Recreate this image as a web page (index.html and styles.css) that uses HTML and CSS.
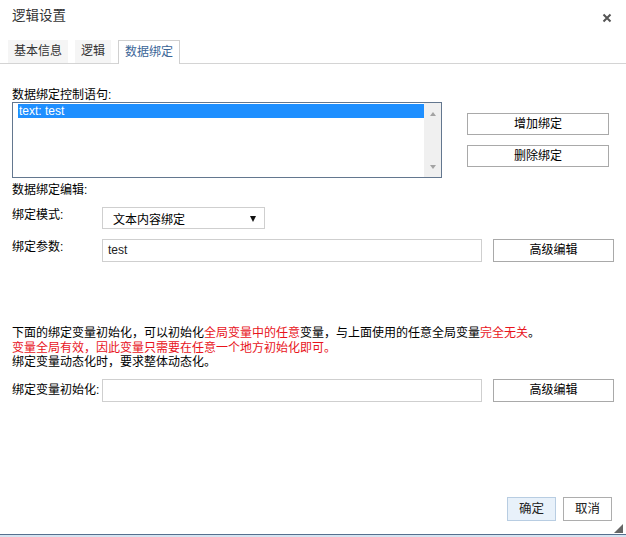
FILE: index.html
```html
<!DOCTYPE html>
<html lang="zh-CN">
<head>
<meta charset="utf-8">
<title>逻辑设置</title>
<link rel="stylesheet" href="styles.css">
</head>
<body>
<div class="dialog">
  <div class="header">
    <span class="title">逻辑设置</span>
    <svg class="close" width="10" height="10" viewBox="0 0 10 10"><path d="M1.5 1.5 L8.5 8.5 M8.5 1.5 L1.5 8.5" stroke="#555" stroke-width="2" fill="none"/></svg>
  </div>
  <div class="tabs">
    <div class="tab">基本信息</div>
    <div class="tab">逻辑</div>
    <div class="tab active">数据绑定</div>
  </div>
  <div class="content">
    <div class="label top">数据绑定控制语句:</div>
    <div class="bind-row">
      <div class="listbox">
        <div class="list-items">
          <div class="item selected">text: test</div>
        </div>
        <div class="scrollbar">
          <span class="arrow up"></span>
          <span class="arrow down"></span>
        </div>
      </div>
      <div class="side-buttons">
        <div class="btn">增加绑定</div>
        <div class="btn">删除绑定</div>
      </div>
    </div>
    <div class="label section">数据绑定编辑:</div>
    <div class="form-row mode">
      <div class="field-label">绑定模式:</div>
      <div class="select"><span>文本内容绑定</span><span class="caret"></span></div>
    </div>
    <div class="form-row param">
      <div class="field-label">绑定参数:</div>
      <div class="input">test</div>
      <div class="btn adv">高级编辑</div>
    </div>
    <div class="note">
      <div>下面的绑定变量初始化，可以初始化<span class="red">全局变量中的任意</span>变量，与上面使用的任意全局变量<span class="red">完全无关</span>。</div>
      <div class="red">变量全局有效，因此变量只需要在任意一个地方初始化即可。</div>
      <div>绑定变量动态化时，要求整体动态化。</div>
    </div>
    <div class="form-row init">
      <div class="field-label">绑定变量初始化:</div>
      <div class="input"></div>
      <div class="btn adv">高级编辑</div>
    </div>
  </div>
  <div class="footer">
    <div class="fbtn ok">确定</div>
    <div class="fbtn">取消</div>
    <span class="grip"></span>
  </div>
  <div class="bottom-edge"></div>
</div>
</body>
</html>
```

FILE: styles.css
```css
* { box-sizing: border-box; }
html, body { margin: 0; padding: 0; background: #fff; }
body {
  font-family: "Liberation Sans", "Noto Sans CJK SC", sans-serif;
  font-size: 12px;
  color: #000;
}
.dialog {
  width: 626px;
  height: 537px;
  display: flex;
  flex-direction: column;
  position: relative;
}
.header {
  height: 40px;
  display: flex;
  align-items: flex-start;
  justify-content: space-between;
  padding: 7px 14px 0 12px;
}
.title { font-size: 13.5px; line-height: 17px; color: #333; }
.close { margin-top: 6px; }
.tabs {
  height: 24px;
  display: flex;
  align-items: flex-end;
  padding-left: 8px;
  border-bottom: 1px solid #d4d4d4;
}
.tab {
  height: 23px;
  line-height: 22px;
  padding: 0 6px;
  margin-right: 7px;
  background: #f5f5f5;
  color: #333;
}
.tab.active {
  background: #fff;
  border: 1px solid #d0d0d0;
  border-bottom: none;
  height: 24px;
  margin-bottom: -1px;
  color: #3a6597;
}
.content { padding: 24px 12px 0 12px; }
.label { line-height: 14px; height: 14px; }
.bind-row { display: flex; align-items: flex-start; }
.listbox {
  width: 430px;
  height: 76px;
  border: 1px solid #63778f;
  display: flex;
}
.list-items { flex: 1; padding: 1px 0 0 5px; }
.item { height: 14px; line-height: 14px; padding-left: 1px; color: #fff; }
.item.selected { background: #1e8fff; }
.scrollbar {
  width: 17px;
  background: #f0f0f0;
  display: flex;
  flex-direction: column;
  justify-content: space-between;
  align-items: center;
  padding: 9px 0 8px;
}
.arrow { width: 0; height: 0; border-left: 3.5px solid transparent; border-right: 3.5px solid transparent; }
.arrow.up { border-bottom: 4px solid #a3a3a3; }
.arrow.down { border-top: 4px solid #a3a3a3; }
.side-buttons {
  margin-left: 25px;
  margin-top: 11px;
  display: flex;
  flex-direction: column;
  gap: 10px;
}
.btn {
  width: 142px;
  height: 22px;
  border: 1px solid #a9a9a9;
  background: #fff;
  text-align: center;
  line-height: 20px;
  color: #000;
}
.label.section { margin-top: 5px; }
.form-row { display: flex; align-items: flex-start; }
.field-label { width: 90px; line-height: 14px; padding-top: 1px; }
.form-row.mode { margin-top: 10px; }
.form-row.param { margin-top: 10px; }
.select {
  width: 163px;
  height: 22px;
  border: 1px solid #cfcfcf;
  display: flex;
  align-items: center;
  justify-content: space-between;
  padding: 0 8px 0 10px;
  color: #000;
}
.caret { width: 0; height: 0; border-left: 3px solid transparent; border-right: 3px solid transparent; border-top: 6px solid #111; margin-top: 1px; }
.input {
  width: 380px;
  height: 23px;
  border: 1px solid #cfcfcf;
  padding-left: 5px;
  line-height: 21px;
  color: #222;
}
.btn.adv { width: 121px; margin-left: 11px; height: 23px; line-height: 21px; }
.note { margin-top: 64px; line-height: 14.5px; color: #000; }
.red { color: #e8141c; }
.form-row.init { margin-top: 9px; }
.form-row.init .field-label { padding-top: 4px; }
.footer {
  margin-top: auto;
  display: flex;
  justify-content: flex-end;
  gap: 7px;
  padding: 0 14px 13px 0;
  position: relative;
}
.fbtn {
  width: 49px;
  height: 24px;
  border: 1px solid #adadad;
  background: #fff;
  text-align: center;
  line-height: 22px;
  font-size: 12.5px;
  color: #222;
}
.fbtn.ok { background: #e8f1fa; border-color: #b8cde2; }
.grip {
  position: absolute;
  right: 3px;
  bottom: 1px;
  width: 0; height: 0;
  border-left: 9px solid transparent;
  border-bottom: 9px solid #666;
}
.bottom-edge {
  height: 3px;
  border-top: 1px solid #56708e;
  background: #d6e4f1;
}
```
